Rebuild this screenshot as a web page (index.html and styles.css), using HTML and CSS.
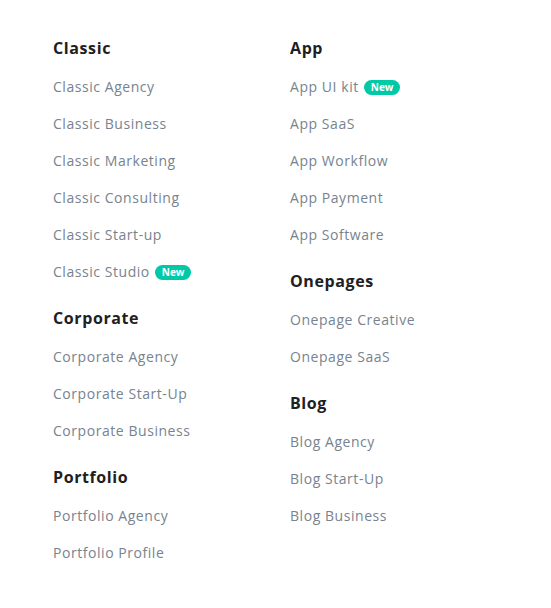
FILE: index.html
```html
<!DOCTYPE html>
<html>
  <head>
    <meta charset="utf-8"/>
    <link rel="stylesheet" href="styles.css">
  </head>
  <body>
    <div class="menu">
      <div class="col">
        <div class="group">
          <h5 class="group-title">Classic</h5>
          <a class="nav-link" href="#">Classic Agency</a>
          <a class="nav-link" href="#">Classic Business</a>
          <a class="nav-link" href="#">Classic Marketing</a>
          <a class="nav-link" href="#">Classic Consulting</a>
          <a class="nav-link" href="#">Classic Start-up</a>
          <a class="nav-link" href="#">Classic Studio <span class="badge">New</span></a>
        </div>
        <div class="group">
          <h5 class="group-title">Corporate</h5>
          <a class="nav-link" href="#">Corporate Agency</a>
          <a class="nav-link" href="#">Corporate Start-Up</a>
          <a class="nav-link" href="#">Corporate Business</a>
        </div>
        <div class="group">
          <h5 class="group-title">Portfolio</h5>
          <a class="nav-link" href="#">Portfolio Agency</a>
          <a class="nav-link" href="#">Portfolio Profile</a>
        </div>
      </div>
      <div class="col">
        <div class="group">
          <h5 class="group-title">App</h5>
          <a class="nav-link" href="#">App UI kit <span class="badge">New</span></a>
          <a class="nav-link" href="#">App SaaS</a>
          <a class="nav-link" href="#">App Workflow</a>
          <a class="nav-link" href="#">App Payment</a>
          <a class="nav-link" href="#">App Software</a>
        </div>
        <div class="group">
          <h5 class="group-title">Onepages</h5>
          <a class="nav-link" href="#">Onepage Creative</a>
          <a class="nav-link" href="#">Onepage SaaS</a>
        </div>
        <div class="group">
          <h5 class="group-title">Blog</h5>
          <a class="nav-link" href="#">Blog Agency</a>
          <a class="nav-link" href="#">Blog Start-Up</a>
          <a class="nav-link" href="#">Blog Business</a>
        </div>
      </div>
    </div>
  </body>
</html>
```

FILE: styles.css
```css
html, body {
  margin: 0;
  padding: 0;
  background-color: #fff;
}
body {
  font-family: "Open Sans", "Liberation Sans", sans-serif;
}
.menu {
  display: grid;
  grid-template-columns: 237px 237px;
  padding: 36px 0 0 53px;
}
.col {
  display: flex;
  flex-direction: column;
  gap: 23px;
}
.group {
  display: flex;
  flex-direction: column;
  align-items: flex-start;
  gap: 15px;
}
.group-title {
  margin: 0 0 1px 0;
  font-size: 16px;
  line-height: 24px;
  font-weight: 700;
  letter-spacing: 0.6px;
  color: #1e2022;
}
.nav-link {
  display: flex;
  align-items: center;
  font-size: 14px;
  line-height: 22px;
  letter-spacing: 0.55px;
  color: #77838f;
  text-decoration: none;
}
.badge {
  display: inline-block;
  margin-left: 5px;
  padding: 0 7px;
  height: 15px;
  line-height: 15px;
  border-radius: 8px;
  background-color: #00c9a7;
  color: #fff;
  font-size: 10px;
  font-weight: 700;
  letter-spacing: 0;
}
```
